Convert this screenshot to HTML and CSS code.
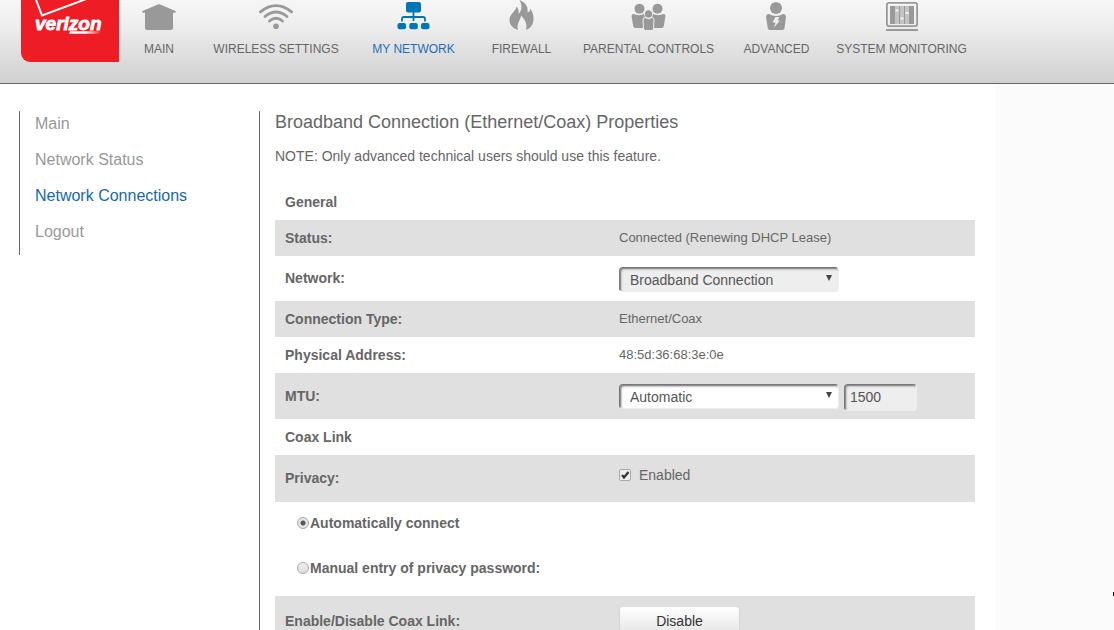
FILE: index.html
```
<!DOCTYPE html>
<html lang="en">
<head>
    <meta charset="UTF-8">
    <meta name="viewport" content="width=device-width, initial-scale=1.0">
    <title>Broadband Connection Properties</title>
    <link rel="stylesheet" href="styles.css">
</head>
<body>
    <header class="header">
        <a class="logo" href="#" aria-label="verizon">
            <svg width="98" height="62" viewBox="0 0 98 62">
                <path d="M14 -3 L21 15.500 L68 -2" fill="none" stroke="#fff" stroke-width="2"/>
                <text class="wordmark" x="14" y="30">verizon</text>
                <defs>
                    <linearGradient id="swoosh" x1="0" x2="1">
                        <stop offset="0.5" stop-color="#fff"/>
                        <stop offset="1" stop-color="#fff" stop-opacity="0"/>
                    </linearGradient>
                </defs>
                <path d="M49 31.200 H81 L77 33.800 H48 Z" fill="url(#swoosh)"/>
            </svg>
        </a>
        <nav class="nav">
            <a href="#">
                <svg width="36" height="32" viewBox="0 0 36 32">
                    <path d="M18 4 L34.500 11 Q35.500 12.500 34 12.800 H32 V28 Q32 30 30 30 H6 Q4 30 4 28 V12.800 H2 Q.5 12.500 1.500 11 Z"/>
                </svg>
                MAIN
            </a>
            <a href="#">
                <svg width="36" height="32" viewBox="0 0 36 32">
                    <g fill="none" stroke="#999" stroke-width="2.800" stroke-linecap="round">
                        <path d="M2.500 11.800 Q18 -.5 33.500 11.800"/>
                        <path d="M7 16.500 Q18 7.500 29 16.500"/>
                        <path d="M11.500 21 Q18 15.500 24.500 21"/>
                    </g>
                    <circle cx="18" cy="26.300" r="2.800"/>
                </svg>
                WIRELESS SETTINGS
            </a>
            <a href="#" class="active">
                <svg width="36" height="32" viewBox="0 0 36 32">
                    <rect x="10" y="2" width="15" height="10.500" rx="2"/>
                    <path d="M6 21.500 V19 Q6 17 8 17 H27 Q29 17 29 19 V21.500 M17.500 12 V21" fill="none" stroke="#0075b5" stroke-width="1.800"/>
                    <rect x="1.500" y="23" width="8.500" height="6.300" rx="2"/>
                    <rect x="13.300" y="23" width="8.500" height="6.300" rx="2"/>
                    <rect x="25" y="23" width="8.500" height="6.300" rx="2"/>
                </svg>
                MY NETWORK
            </a>
            <a href="#">
                <svg width="36" height="32" viewBox="0 0 36 32">
                    <path d="M14 30 C9 28.500 5.500 25 5.500 20 C5.500 14 12.500 10.500 12.500 6.500 C14.500 8.500 15 11 14.500 14 C18 11 18.500 5 15.500 0 C20.500 2 24.500 6 23.500 12.500 C25.500 12 26.500 10.500 26 8.500 C28.500 11 29.500 15 29.500 19 C29.500 25 26 28.500 22 30 C23.500 25 21.500 20 17 15.500 C17 19.500 12 24 14 30 Z"/>
                </svg>
                FIREWALL
            </a>
            <a href="#">
                <svg width="36" height="32" viewBox="0 0 36 32">
                    <circle cx="8.500" cy="8.800" r="5"/>
                    <circle cx="26.500" cy="8.800" r="5"/>
                    <path d="M2.500 14 Q8.500 16.500 13.500 13.500 L17 20 V28 H4.500 Q2.500 28 2.200 26 L.5 16 Q.5 14 2.500 14 Z"/>
                    <path d="M32.500 14 Q26.500 16.500 21.500 13.500 L18 20 V28 H30.500 Q32.500 28 32.800 26 L34.500 16 Q34.500 14 32.500 14 Z"/>
                    <g stroke="#f0f0f0" stroke-width="1">
                        <circle cx="17.500" cy="14" r="4.200"/>
                        <path d="M14 17.500 Q17.500 20 21 17.500 Q23 17.500 23 20 L22.500 28.500 Q22.500 30.500 20.500 30.500 H14.500 Q12.500 30.500 12.500 28.500 L12 20 Q12 17.500 14 17.500 Z"/>
                    </g>
                </svg>
                PARENTAL CONTROLS
            </a>
            <a href="#">
                <svg width="36" height="32" viewBox="0 0 36 32">
                    <circle cx="17" cy="8" r="6"/>
                    <path d="M10 14 Q17 18 24 14 Q27 14 27 17 L25.500 28 Q25.500 30 23.500 30 H11 Q9 30 8.800 28 L7 17 Q7 14 10 14 Z"/>
                    <path class="cutout" d="M16.500 17 L20.500 17 L18.500 20.500 L21 20.500 L15 27.500 L16.500 22.500 L13.500 22.500 Z"/>
                </svg>
                ADVANCED
            </a>
            <a href="#">
                <svg width="36" height="32" viewBox="0 0 36 32">
                    <rect x="2.900" y="2.900" width="30.200" height="23.200" rx="2" fill="none" stroke="#999" stroke-width="1.800"/>
                    <rect x="6" y="6" width="24" height="18"/>
                    <path d="M13 6 V24 M18 6 V24 M23 6 V24" fill="none" stroke="#f0f0f0" stroke-width="3"/>
                    <path d="M13 6 V24 M18 6 V24 M23 6 V24" fill="none" stroke="#999" stroke-width="1"/>
                    <path d="M11.500 10.500 H14.500 M16.500 18.500 H19.500 M21.500 13 H24.500" fill="none" stroke="#f2f2f2" stroke-width="2"/>
                    <rect x="2" y="29" width="32" height="2"/>
                </svg>
                SYSTEM MONITORING
            </a>
        </nav>
    </header>

    <div class="page">
        <ul class="sidebar">
            <li><a href="#">Main</a></li>
            <li><a href="#">Network Status</a></li>
            <li><a href="#" class="active">Network Connections</a></li>
            <li><a href="#">Logout</a></li>
        </ul>

        <main class="content">
            <h1>Broadband Connection (Ethernet/Coax) Properties</h1>
            <p class="note">NOTE: Only advanced technical users should use this feature.</p>

            <table class="properties">
                <tr>
                    <th colspan="2">General</th>
                </tr>
                <tr class="shaded">
                    <th>Status:</th>
                    <td>Connected (Renewing DHCP Lease)</td>
                </tr>
                <tr class="field">
                    <th><label for="network">Network:</label></th>
                    <td>
                        <div class="select disabled">
                            <select id="network">
                                <option>Broadband Connection</option>
                            </select>
                        </div>
                    </td>
                </tr>
                <tr class="shaded">
                    <th>Connection Type:</th>
                    <td>Ethernet/Coax</td>
                </tr>
                <tr>
                    <th>Physical Address:</th>
                    <td>48:5d:36:68:3e:0e</td>
                </tr>
                <tr class="shaded field tall">
                    <th><label for="mtu">MTU:</label></th>
                    <td>
                        <div class="controls">
                            <div class="select">
                                <select id="mtu">
                                    <option>Automatic</option>
                                </select>
                            </div>
                            <input type="text" class="mtu-size" value="1500" aria-label="MTU size" readonly>
                        </div>
                    </td>
                </tr>
                <tr>
                    <th colspan="2">Coax Link</th>
                </tr>
                <tr class="shaded privacy">
                    <th>Privacy:</th>
                    <td>
                        <label class="check"><input type="checkbox" checked>Enabled</label>
                    </td>
                </tr>
                <tr class="option">
                    <th colspan="2"><label><input type="radio" name="privacy" checked>Automatically connect</label></th>
                </tr>
                <tr class="option">
                    <th colspan="2"><label><input type="radio" name="privacy">Manual entry of privacy password:</label></th>
                </tr>
                <tr class="shaded action">
                    <th>Enable/Disable Coax Link:</th>
                    <td><button type="button">Disable</button></td>
                </tr>
            </table>
        </main>
    </div>
    <span class="edge-mark"></span>
</body>
</html>
```
FILE: styles.css
```
* {
    box-sizing: border-box;
}

body {
    position: relative;
    display: flex;
    flex-direction: column;
    height: 100vh;
    margin: 0;
    overflow: hidden;
    background: #fbfbfb;
    color: #666;
    font-family: Arial, "Liberation Sans", sans-serif;
    font-size: 14px;
}

a {
    color: #999;
    text-decoration: none;
}

/* header */
.header {
    display: flex;
    flex-shrink: 0;
    height: 84px;
    padding-left: 21px;
    border-bottom: 1px solid #666;
    background: linear-gradient(#f6f6f6, #f0f0f0 25%, #d0d0d0);
}

.logo {
    width: 98px;
    height: 62px;
    border-bottom-left-radius: 9px;
    background: #ee1c25;
    overflow: hidden;
}

.wordmark {
    fill: #fff;
    stroke: #fff;
    stroke-width: 0.8px;
    font-size: 19px;
    font-weight: bold;
    font-style: italic;
}

.nav {
    display: grid;
    grid-template-columns: 70px 164px 111px 105px 149px 107px 143px;
    margin-left: 5px;
}

.nav a {
    display: flex;
    flex-direction: column;
    align-items: center;
    gap: 9px;
    color: #666;
    font-size: 12px;
    line-height: 16px;
    white-space: nowrap;
}

.nav svg {
    fill: #999;
}

.nav .cutout {
    fill: #eee;
}

.nav .active {
    color: #1f6fb5;
}

.nav .active svg {
    fill: #0075b5;
}

/* layout */
.page {
    display: flex;
    flex: 1;
    align-items: flex-start;
    max-width: 996px;
    min-height: 0;
    padding: 27px 21px 0 19px;
    background: #fff;
}

.sidebar {
    flex: 0 0 240px;
    margin: 0;
    padding: 0 0 0 15px;
    border-left: 1px solid #666;
    list-style: none;
    font-size: 16px;
    line-height: 26px;
}

.sidebar li {
    padding-bottom: 10px;
}

.sidebar .active {
    color: #1569ae;
}

.content {
    flex: 1;
    padding-left: 15px;
    border-left: 1px solid #666;
}

h1 {
    margin: 0;
    font-size: 18px;
    font-weight: normal;
    line-height: 22px;
}

.note {
    margin: 14px 0 18px;
    line-height: 19px;
}

/* properties table */
.properties {
    width: 100%;
    border-spacing: 0;
}

.properties th,
.properties td {
    height: 36px;
    padding: 0;
    text-align: left;
}

.properties th {
    width: 344px;
    padding-left: 10px;
}

.properties td {
    padding-bottom: 2px;
    font-size: 13px;
}

.properties .field th,
.properties .field td {
    height: 45px;
    padding-bottom: 1px;
}

.properties .field td {
    padding-top: 2px;
    padding-bottom: 0;
}

.properties .tall th,
.properties .tall td {
    height: 46px;
}

.shaded {
    background: #e0e0e0;
}

.controls {
    display: flex;
    gap: 5px;
}

.select {
    position: relative;
    width: 220px;
}

.select::after {
    content: "";
    position: absolute;
    top: 8px;
    right: 7px;
    border: solid transparent;
    border-width: 6px 3px 0;
    border-top-color: #444;
    pointer-events: none;
}

select,
.mtu-size {
    height: 25px;
    border: 1px solid #eee;
    border-top-color: #777;
    border-left-color: #777;
    border-radius: 4px;
    background: #fff;
    box-shadow: inset 1px 1px 1px #888, inset 2px 2px 2px #ccc;
    color: #555;
    font-family: inherit;
    font-size: 14px;
}

select {
    display: block;
    width: 100%;
    padding: 1px 10px 0;
    appearance: none;
}

.disabled select,
.mtu-size {
    background: #eee;
}

.mtu-size {
    width: 73px;
    height: 27px;
    padding: 0 5px;
}

.check {
    display: flex;
    align-items: center;
    gap: 8px;
    font-size: 14px;
}

.properties .privacy th,
.properties .privacy td {
    height: 47px;
}

.properties .privacy th {
    padding-bottom: 2px;
}

.properties .privacy td {
    padding-bottom: 7px;
}

input[type="checkbox"],
input[type="radio"] {
    width: 12px;
    height: 12px;
    margin: 0;
    border: 1px solid #aaa;
    background: linear-gradient(#eee, #ddd);
    appearance: none;
}

input[type="checkbox"] {
    border-radius: 2px;
}

input[type="checkbox"]:checked {
    background: url("data:image/svg+xml,%3Csvg xmlns='http://www.w3.org/2000/svg' viewBox='0 0 10 10'%3E%3Cpath d='M2 5 L4 7.500 L8.500 2' fill='none' stroke='%23333' stroke-width='2.200'/%3E%3C/svg%3E") #eee;
}

input[type="radio"] {
    border-radius: 50%;
}

input[type="radio"]:checked {
    background: radial-gradient(circle, #555 0 2px, #e6e6e6 3px);
}

.properties .option th {
    height: 45px;
    padding-bottom: 4px;
    padding-left: 22px;
}

.properties .option + .option th {
    height: 49px;
    padding-bottom: 8px;
}

.option label {
    display: flex;
    align-items: center;
    gap: 1px;
}

.properties .action th,
.properties .action td {
    height: 50px;
}

.properties .action td {
    padding-bottom: 0;
}

button {
    display: block;
    width: 119px;
    height: 28px;
    margin-left: 1px;
    border: 0;
    border-radius: 3px;
    background: linear-gradient(#fff, #e4e4e4);
    box-shadow: 0 1px 2px #bbb;
    color: #333;
    font-family: inherit;
    font-size: 14px;
}

/* small tick on the right edge of the window */
.edge-mark {
    position: absolute;
    top: 592px;
    right: 0;
    width: 1px;
    height: 4px;
    background: #000;
}
```
